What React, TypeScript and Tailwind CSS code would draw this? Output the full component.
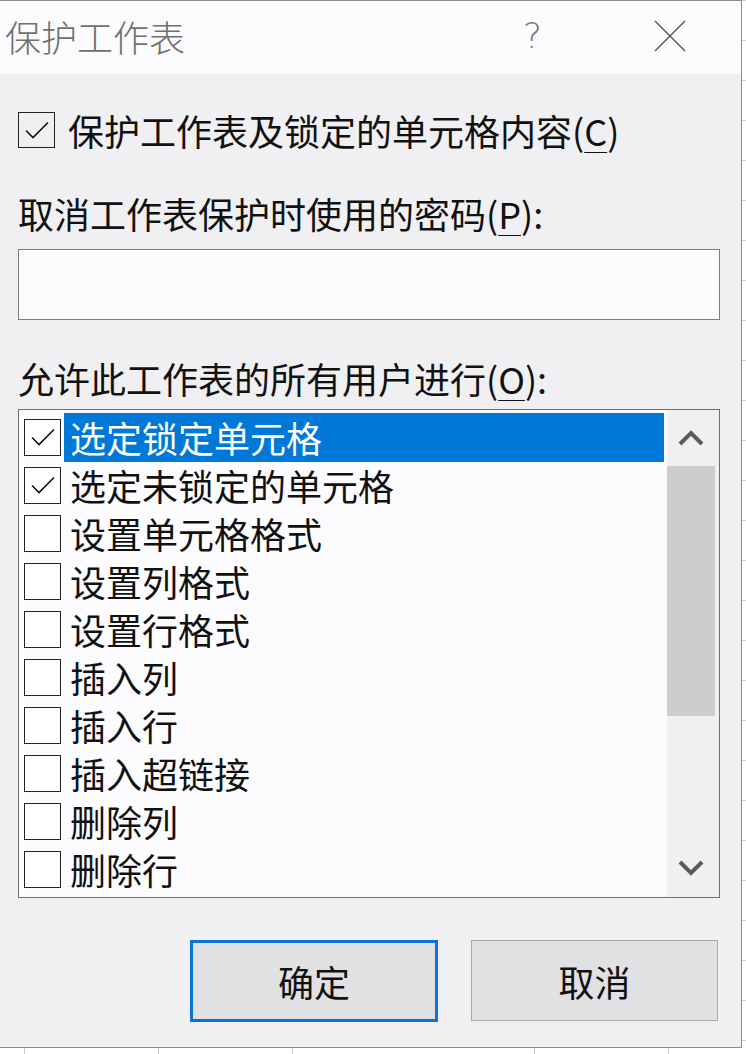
import React from 'react';

const FONT = { fontFamily: '"Microsoft YaHei", "Noto Sans CJK SC", "Noto Sans", sans-serif' };

const items = [
  { label: '选定锁定单元格', checked: true, selected: true },
  { label: '选定未锁定的单元格', checked: true },
  { label: '设置单元格格式' },
  { label: '设置列格式' },
  { label: '设置行格式' },
  { label: '插入列' },
  { label: '插入行' },
  { label: '插入超链接' },
  { label: '删除列' },
  { label: '删除行' },
];

function CheckBox({ checked }: { checked?: boolean }) {
  return (
    <div className="w-[37px] h-[37px] shrink-0 border-[1.5px] border-[#222] bg-white flex items-center justify-center">
      {checked && (
        <svg width="26" height="22" viewBox="0 0 26 22" fill="none">
          <path d="M2 11.5 L9 18.5 L24 3.5" stroke="#111" strokeWidth="1.6" />
        </svg>
      )}
    </div>
  );
}

function Chevron({ up }: { up?: boolean }) {
  return (
    <svg width="26" height="16" viewBox="0 0 26 16" fill="none">
      <path d={up ? 'M2 14 L13 3 L24 14' : 'M2 2 L13 13 L24 2'} stroke="#5b5b5b" strokeWidth="4" />
    </svg>
  );
}

export default function App() {
  return (
    <div className="w-[746px] h-[1054px] bg-white overflow-hidden flex flex-col" style={FONT}>
      <div className="flex h-[1048px]">
        {/* dialog */}
        <div className="w-[742px] h-full flex flex-col bg-[#f0eff1] border-r border-b border-t border-[#8d8d8d]">
          {/* title bar */}
          <div className="h-[73px] shrink-0 bg-[#fbfafc] flex items-center pl-[5px] pr-[55px] pb-[3px]">
            <span className="text-[36px] leading-none text-[#707070] font-light">保护工作表</span>
            <span className="ml-auto mr-[112px] text-[36px] leading-none text-[#7a7a7a]" style={{ fontFamily: '"DejaVu Sans", sans-serif', fontWeight: 200 }}>?</span>
            <svg width="32" height="32" viewBox="0 0 32 32" fill="none">
              <path d="M1 1 L31 31 M31 1 L1 31" stroke="#555" strokeWidth="1.4" />
            </svg>
          </div>

          {/* body */}
          <div className="flex flex-col px-[18px]">
            <div className="mt-[38px] h-[36px] flex items-center gap-[13px]">
              <div className="w-[37px] h-[36px] shrink-0 border-[1.5px] border-[#222] flex items-center justify-center">
                <svg width="26" height="22" viewBox="0 0 26 22" fill="none">
                  <path d="M2 11.5 L9 18.5 L24 3.5" stroke="#111" strokeWidth="1.6" />
                </svg>
              </div>
              <span className="text-[36px] leading-none text-[#111] whitespace-nowrap">
                保护工作表及锁定的单元格内容(<span className="underline underline-offset-[6px] decoration-1">C</span>)
              </span>
            </div>

            <div className="mt-[45px] h-[40px] flex items-center text-[36px] leading-none text-[#111] whitespace-nowrap">
              取消工作表保护时使用的密码(<span className="underline underline-offset-[6px] decoration-1">P</span>):
            </div>

            <div className="mt-[16px] h-[71px] w-[702px] bg-[#fcfbfd] border border-[#7c7c7c]" />

            <div className="mt-[38px] h-[40px] flex items-center text-[36px] leading-none text-[#111] whitespace-nowrap">
              允许此工作表的所有用户进行(<span className="underline underline-offset-[6px] decoration-1">O</span>):
            </div>

            {/* list box */}
            <div className="mt-[11px] h-[489px] w-[702px] bg-[#fcfbfd] border border-[#6f6f6f] flex">
              <div className="flex-1 flex flex-col pt-[3px] pl-[5px]">
                {items.map((it) => (
                  <div key={it.label} className="h-[48px] flex items-center">
                    <CheckBox checked={it.checked} />
                    <div
                      className={`ml-[3px] w-[600px] h-[49px] flex items-center pl-[6px] text-[36px] leading-none whitespace-nowrap ${
                        it.selected ? 'bg-[#0078d7] text-white' : 'text-[#111]'
                      }`}
                    >
                      {it.label}
                    </div>
                  </div>
                ))}
              </div>
              {/* scrollbar */}
              <div className="w-[52px] h-full bg-[#f0eff1] flex flex-col pr-[4px]">
                <div className="h-[56px] flex items-center justify-center">
                  <Chevron up />
                </div>
                <div className="h-[250px] bg-[#cdcccf]" />
                <div className="flex-1" />
                <div className="h-[58px] flex items-center justify-center">
                  <Chevron />
                </div>
              </div>
            </div>

            {/* buttons */}
            <div className="mt-[42px] flex pl-[172px] gap-[33px]">
              <button className="w-[248px] h-[82px] bg-[#e1e0e2] border-[3px] border-[#0a74d6] text-[36px] leading-none text-[#111]">
                确定
              </button>
              <button className="w-[247px] h-[81px] bg-[#e1e0e2] border border-[#a9a9a9] text-[36px] leading-none text-[#111]">
                取消
              </button>
            </div>
          </div>
        </div>

        {/* spreadsheet strip on the right */}
        <div className="flex-1 flex flex-col bg-white">
          <div className="h-[3px]" />
          {Array.from({ length: 27 }).map((_, i) => (
            <div key={i} className="h-[40px] shrink-0 border-t border-[#d0d0d0]" />
          ))}
        </div>
      </div>

      {/* spreadsheet strip at the bottom */}
      <div className="flex-1 flex bg-white">
        <div className="w-[24px]" />
        <div className="w-[134px] border-l border-[#c8c8c8]" />
        <div className="w-[134px] border-l border-[#c8c8c8]" />
        <div className="w-[242px] border-l border-[#c8c8c8]" />
        <div className="w-[134px] border-l border-[#c8c8c8]" />
        <div className="flex-1 border-l border-[#c8c8c8]" />
      </div>
    </div>
  );
}
